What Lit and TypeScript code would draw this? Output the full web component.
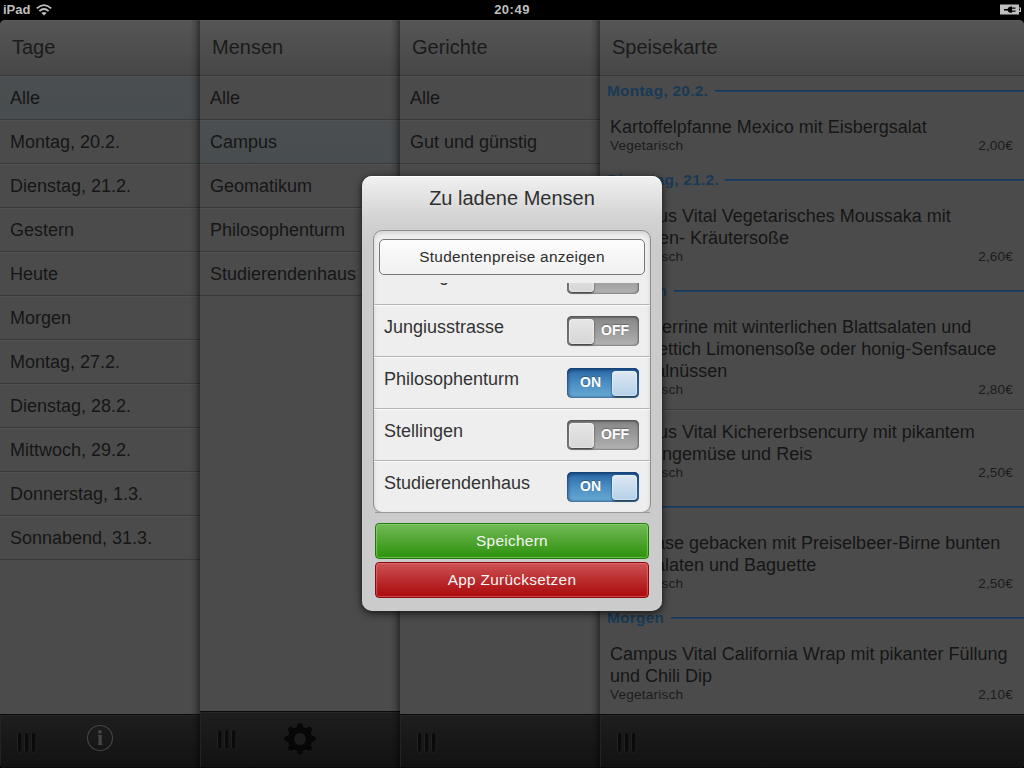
import { LitElement, html, css, svg, nothing } from "lit";
import { customElement, property } from "lit/decorators.js";

const DAYS = ["Alle", "Montag, 20.2.", "Dienstag, 21.2.", "Gestern", "Heute", "Morgen", "Montag, 27.2.", "Dienstag, 28.2.", "Mittwoch, 29.2.", "Donnerstag, 1.3.", "Sonnabend, 31.3."];
const MENSEN = ["Alle", "Campus", "Geomatikum", "Philosophenturm", "Studierendenhaus"];
const DISHES = ["Alle", "Gut und günstig"];

interface Dish { lines: string[]; price: string }
const MENU: { day: string; dishes: Dish[] }[] = [
  { day: "Montag, 20.2.", dishes: [{ lines: ["Kartoffelpfanne Mexico mit Eisbergsalat"], price: "2,00€" }] },
  { day: "Dienstag, 21.2.", dishes: [{ lines: ["Campus Vital Vegetarisches Moussaka mit", "Tomaten- Kräutersoße"], price: "2,60€" }] },
  { day: "Gestern", dishes: [
    { lines: ["Ententerrine mit winterlichen Blattsalaten und", "und Rettich Limonensoße oder honig-Senfsauce", "mit Walnüssen"], price: "2,80€" },
    { lines: ["Campus Vital Kichererbsencurry mit pikantem", "Bohnengemüse und Reis"], price: "2,50€" },
  ] },
  { day: "Heute", dishes: [{ lines: ["Fetakäse gebacken mit Preiselbeer-Birne bunten", "Blattsalaten und Baguette"], price: "2,50€" }] },
  { day: "Morgen", dishes: [{ lines: ["Campus Vital California Wrap mit pikanter Füllung", "und Chili Dip"], price: "2,10€" }] },
];

const TEETH = [0, 45, 90, 135, 180, 225, 270, 315];

@customElement("toggle-switch")
class ToggleSwitch extends LitElement {
  @property({ type: Boolean }) on = false;
  static styles = css`
    :host { display: block; }
    .track { box-sizing: border-box; width: 72px; height: 30px; border-radius: 5px; display: flex; align-items: center; padding: 0 2px;
      font: bold 14px "Liberation Sans", Arial, sans-serif; color: #fff; }
    .off { background: linear-gradient(#858585, #b2b2b2); box-shadow: inset 0 1px 3px #444, inset 0 0 2px #555; }
    .on { background: linear-gradient(#2865a3, #4a8ec2 50%, #6ca9d4); box-shadow: inset 0 1px 4px #0b2d5c, inset 0 0 2px #1f5288; }
    .word { flex: 1; text-align: center; line-height: 28px; padding-bottom: 2px; text-shadow: 0 -1px 1px rgba(0,0,0,.3); }
    .off .word { padding-right: 1px; }
    .knob { box-sizing: border-box; width: 25px; height: 25px; border-radius: 4px; box-shadow: 0 1px 2px rgba(0,0,0,.75), inset 0 0 1px 1px rgba(255,255,255,.35); }
    .off .knob { background: linear-gradient(#e6e6e6, #d6d6d6); }
    .on .knob { background: linear-gradient(#dde8f2, #b4d1e8); }
  `;
  render() {
    const knob = html`<span class="knob"></span>`;
    return this.on
      ? html`<div class="track on"><span class="word">ON</span>${knob}</div>`
      : html`<div class="track off">${knob}<span class="word">OFF</span></div>`;
  }
}

@customElement("app-root")
class AppRoot extends LitElement {
  static styles = css`
    :host { display: block; width: 1024px; height: 768px; overflow: hidden; position: relative; background: #000; font-family: "Liberation Sans", Arial, sans-serif; color: #161616; }
    .screen { height: 768px; display: flex; flex-direction: column; }
    .status { height: 20px; flex: none; display: grid; grid-template-columns: 1fr auto 1fr; align-items: center; color: #bfbfbf; font-weight: bold; font-size: 13px; line-height: 18px; }
    .device { display: flex; align-items: center; gap: 6px; padding-left: 3px; height: 18px; }
    .clock { height: 18px; letter-spacing: .5px; }
    .plug { justify-self: end; display: flex; padding-right: 3px; margin-top: -2px; }
    .board { height: 748px; display: grid; grid-template-columns: 200px 200px 200px 424px; border-radius: 5px; overflow: hidden; background: #4b4b4b; }
    .col { display: flex; flex-direction: column; height: 748px; position: relative; min-width: 0; }
    .shade::after { content: ""; position: absolute; top: 0; bottom: 0; right: 0; width: 10px; pointer-events: none; background: linear-gradient(to right, rgba(0,0,0,0), rgba(0,0,0,.12) 50%, rgba(0,0,0,.42)); }
    .head { box-sizing: border-box; height: 56px; flex: none; padding-left: 12px; font-size: 20px; line-height: 52px; color: #1b1b1b; border-top: 1px solid #5b5b5b; border-bottom: 1px solid #383838; background: linear-gradient(#555, #4e4e4e 50%, #474747); }
    .body { flex: 1; min-height: 0; overflow: hidden; background: #4b4b4b; }
    .row { box-sizing: border-box; height: 44px; padding-left: 10px; font-size: 18px; line-height: 42px; border-top: 1px solid #525252; border-bottom: 1px solid #3a3a3a; white-space: nowrap; }
    .row.sel { background: linear-gradient(#4a4e51, #484d50); }
    .bar { box-sizing: border-box; height: 54px; flex: none; border-top: 1px solid #0b0b0b; border-bottom: 1px solid #0a0a0a; background: linear-gradient(#1e1e1e, #121212); box-shadow: inset 0 1px #262626, inset 1px 0 #222; display: flex; padding-left: 17px; }
    .bar.tall { height: 57px; }
    .grip { margin-top: 16px; }
    .info { margin-left: 48px; margin-top: 8px; }
    .gear { margin-left: 46px; margin-top: 10px; }
    .day { height: 29px; display: flex; align-items: center; gap: 6.5px; padding-left: 7px; font-size: 15.4px; letter-spacing: .28px; font-weight: bold; color: #193a56; }
    .rule { flex: 1; height: 1px; background: #183456; border-bottom: 1px solid #1d4468; }
    .dish { padding: 11px 11px 11px 10px; }
    .dish + .dish { border-top: 1px solid #3a3a3a; box-shadow: inset 0 1px #525252; }
    .name { font-size: 18px; line-height: 22px; white-space: nowrap; }
    .meta { display: flex; justify-content: space-between; font-size: 13.6px; letter-spacing: .2px; line-height: 16px; color: #1c1c1c; }
    .cost { letter-spacing: .15px; }

    .modal { position: absolute; left: 362px; top: 176px; width: 300px; height: 435px; box-sizing: border-box; border-radius: 10px; padding: 0 11px 0 12px; display: flex; flex-direction: column;
      background: linear-gradient(#f1f1f1, #d3d3d3 42px, #cbcbcb 70px); box-shadow: 0 2px 8px rgba(0,0,0,.75), inset 0 1px #fff; }
    .title { height: 54px; line-height: 45px; font-size: 20px; color: #303030; text-align: center; padding-right: 1px; flex: none; }
    .set { box-sizing: border-box; height: 283px; flex: none; border: 1px solid #8e8e8e; border-radius: 9px; background: #eee; overflow: hidden; display: flex; flex-direction: column; box-shadow: inset 0 2px 4px rgba(0,0,0,.12); margin-left: -1px; }
    .prices { box-sizing: border-box; flex: none; height: 36px; margin: 8px 5px 8px; border: 1px solid #777; border-radius: 5px; background: linear-gradient(#fcfcfc, #f1f1f1); text-align: center; font-size: 15.4px; letter-spacing: .28px; line-height: 34px; color: #2e2e2e; }
    .clip { height: 230px; overflow: hidden; display: flex; flex-direction: column; justify-content: flex-end; }
    .opt { box-sizing: border-box; height: 52px; flex: none; border-top: 1px solid #fbfbfb; border-bottom: 1px solid #b5b5b5; display: flex; justify-content: space-between; padding: 10px 11px 0 10px; font-size: 18px; color: #333; }
    .opt:last-child { border-bottom: 0; height: 51px; }
    .label { line-height: 22px; }
    .foot { display: flex; flex-direction: column; gap: 3px; padding: 0 2px 0 1px; }
    .foot::before { content: ""; height: 1px; margin: -1px -1px 7px 0; background: #999; }
    .btn { box-sizing: border-box; height: 36px; border-radius: 4px; color: #f5f5f5; text-align: center; font-size: 15.4px; letter-spacing: .28px; line-height: 34px; }
    .green { border: 1px solid #1f7a08; background: linear-gradient(#72bb56, #53a735 45%, #2c920b); box-shadow: inset 0 0 1px 1px rgba(160,225,130,.55); }
    .red { border: 1px solid #8d090b; background: linear-gradient(#cd5355, #bb2c2e 50%, #ab0a0c); box-shadow: inset 0 0 1px 1px rgba(235,130,130,.55); }
  `;

  grip() {
    return html`<svg class="grip" width="20" height="23" viewBox="0 0 20 23">
      ${[1, 8, 15].map((x) => svg`<rect x=${x - 0.5} y="1.5" width="4.500" height="20" rx="2.2" fill="#0b0b0b" stroke="#212121" stroke-width="1"></rect>`)}
    </svg>`;
  }

  info() {
    return html`<svg class="info" width="30" height="30" viewBox="0 0 30 30">
      <circle cx="15" cy="15" r="12.5" fill="none" stroke="#454545" stroke-width="1.1"></circle>
      <circle cx="14.9" cy="8.8" r="1.9" fill="#454545"></circle>
      <path d="M12.9 12h3.900v8.800h.7v1.200h-4.600v-1.200h.6v-7.400h-.6z" fill="#454545"></path>
    </svg>`;
  }

  gear() {
    const tooth = (a: number) => svg`<path transform="rotate(${a})" d="M-5-10.500Q-2.500-12-2.500-14.500Q0-17.500 2.500-14.500Q2.500-12 5-10.500z"></path>`;
    return html`<svg class="gear" width="34" height="34" viewBox="-17 -17 34 34">
      <g fill="#222" transform="translate(0 .8)"><circle r="12"></circle>${TEETH.map(tooth)}</g>
      <g fill="#070707"><circle r="12"></circle>${TEETH.map(tooth)}</g>
      <circle r="6" fill="#1b1b1b"></circle>
    </svg>`;
  }

  column(title: string, items: string[], selected: number, icon: unknown, tall = false) {
    return html`<section class="col shade">
      <div class="head">${title}</div>
      <div class="body">${items.map((t, i) => html`<div class="row ${i === selected ? "sel" : ""}">${t}</div>`)}</div>
      <div class="bar ${tall ? "tall" : ""}">${this.grip()}${icon}</div>
    </section>`;
  }

  option(name: string, on: boolean) {
    return html`<div class="opt"><span class="label">${name}</span><toggle-switch ?on=${on}></toggle-switch></div>`;
  }

  render() {
    return html`
      <div class="screen">
        <div class="status">
          <span class="device">iPad
            <svg width="16" height="12" viewBox="0 0 16 12" fill="none" stroke="#bfbfbf" stroke-width="1.8">
              <path d="M.8 4.400Q8-2.200 15.200 4.400M3.400 7.100Q8 2.900 12.600 7.100"></path><path d="M5.400 8.900Q8 6.900 10.600 8.900L8 11.600z" fill="#bfbfbf" stroke="none"></path>
            </svg></span>
          <span class="clock">20:49</span>
          <span class="plug"><svg width="21" height="11" viewBox="0 0 21 11">
            <path d="M0 .5h19v3h2v4.500h-2v2.500H0z" fill="#bfbfbf"></path><path d="M19 4.500h1v2h-1z" fill="#000"></path>
            <path d="M4 5h3.500q1-2.500 3-2.500h1.500v1h3.500v1.200h-3.500v1.800h3.500v1.200h-3.500v1h-1.500q-2 0-3-2.200H4z" fill="#000"></path>
          </svg></span>
        </div>
        <div class="board">
          ${this.column("Tage", DAYS, 0, this.info())}
          ${this.column("Mensen", MENSEN, 1, this.gear(), true)}
          ${this.column("Gerichte", DISHES, -1, nothing)}
          <section class="col">
            <div class="head">Speisekarte</div>
            <div class="body">${MENU.map((g) => html`
              <div class="day"><span>${g.day}</span><span class="rule"></span></div>
              ${g.dishes.map((d) => html`<div class="dish">
                ${d.lines.map((l) => html`<div class="name">${l}</div>`)}
                <div class="meta"><span>Vegetarisch</span><span class="cost">${d.price}</span></div>
              </div>`)}`)}</div>
            <div class="bar">${this.grip()}</div>
          </section>
        </div>
      </div>
      <div class="modal">
        <div class="title">Zu ladene Mensen</div>
        <div class="set">
          <div class="prices">Studentenpreise anzeigen</div>
          <div class="clip">
            ${this.option("Harburg", false)}
            ${this.option("Jungiusstrasse", false)}
            ${this.option("Philosophenturm", true)}
            ${this.option("Stellingen", false)}
            ${this.option("Studierendenhaus", true)}
          </div>
        </div>
        <div class="foot">
          <div class="btn green">Speichern</div>
          <div class="btn red">App Zurücksetzen</div>
        </div>
      </div>`;
  }
}
